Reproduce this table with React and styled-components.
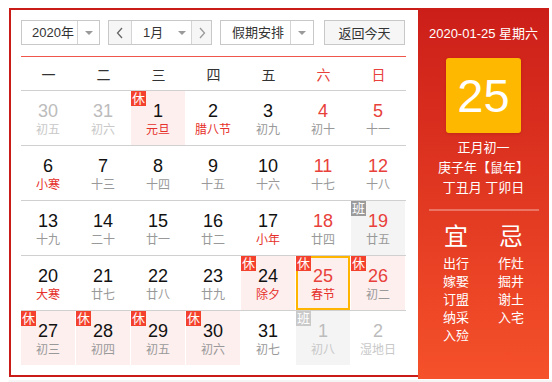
import React from "react";
import styled, { createGlobalStyle, css } from "styled-components";

const Global = createGlobalStyle`
  html, body { margin: 0; padding: 0; background: #fff; }
  body { font-family: "Liberation Sans", "Noto Sans CJK SC", sans-serif; }
`;

const Page = styled.div`
  padding: 8px 0 0 9px;
`;

const Widget = styled.div`
  display: flex;
  width: 540px;
  height: 370px;
`;

const Main = styled.div`
  box-sizing: border-box;
  width: 409px;
  height: 369px;
  border: 2px solid #c91c18;
  border-right: none;
  padding: 10px 12px 0 10px;
  background: #fff;
`;

const Toolbar = styled.div`
  display: flex;
  align-items: center;
  height: 25px;
  padding-bottom: 11px;
  border-bottom: 1px solid #f0574a;
`;

const Box = styled.div`
  box-sizing: border-box;
  display: flex;
  height: 25px;
  border: 1px solid #c8c8c8;
  margin-right: ${(p) => p.$mr || 8}px;
  font-size: 13px;
  color: #333;
  background: #fff;
`;

const Part = styled.div`
  box-sizing: border-box;
  display: flex;
  align-items: center;
  justify-content: ${(p) => p.$justify || "flex-start"};
  flex: none;
  width: ${(p) => p.$w}px;
  padding-left: ${(p) => p.$pl || 0}px;
  border-left: ${(p) => (p.$divider ? "1px solid #d4d4d4" : "none")};
  background: ${(p) => (p.$gray ? "#f6f6f6" : "#fff")};
  line-height: 23px;
  white-space: nowrap;
`;

const Caret = styled.span`
  flex: none;
  width: 0;
  height: 0;
  border-left: 4px solid transparent;
  border-right: 4px solid transparent;
  border-top: 4px solid #9a9a9a;
  margin-left: ${(p) => p.$ml || 0}px;
`;

const Button = styled.div`
  box-sizing: border-box;
  width: 81px;
  height: 25px;
  border: 1px solid #c8c8c8;
  background: #f6f6f6;
  font-size: 13px;
  color: #333;
  display: flex;
  align-items: center;
  justify-content: center;
  margin-left: 2px;
`;

const WeekHead = styled.div`
  display: grid;
  grid-template-columns: repeat(7, 55px);
  height: 33px;
  align-items: center;
  border-bottom: 1px solid #d0d0d0;
`;

const WeekDay = styled.div`
  text-align: center;
  font-size: 14px;
  color: ${(p) => (p.$red ? "#e8413b" : "#333")};
  padding-top: 1px;
`;

const Row = styled.div`
  display: grid;
  grid-template-columns: repeat(7, 55px);
  height: 54px;
  & + & { border-top: 1px solid #d0d0d0; }
`;

const Cell = styled.div`
  position: relative;
  box-sizing: border-box;
  width: 54px;
  height: 54px;
  padding-top: 10px;
  display: flex;
  flex-direction: column;
  align-items: center;
  background: ${(p) =>
    p.$bg === "rest" ? "#fdefee" : p.$bg === "work" ? "#f4f4f4" : "#fff"};
  ${(p) =>
    p.$today &&
    css`
      border: 2px solid #ffb400;
      padding-top: 8px;
    `}
`;

const Num = styled.div`
  font-size: 18px;
  line-height: 20px;
  color: ${(p) => (p.$other ? "#bcbcbc" : p.$red ? "#e8413b" : "#111")};
`;

const Lunar = styled.div`
  margin-top: 1px;
  font-size: 12px;
  line-height: 16px;
  color: ${(p) => (p.$other ? "#c8c8c8" : p.$red ? "#e6302b" : "#999")};
`;

const Badge = styled.span`
  position: absolute;
  left: ${(p) => (p.$today ? -2 : 0)}px;
  top: ${(p) => (p.$today ? -2 : 0)}px;
  width: 15px;
  height: 15px;
  line-height: 15px;
  font-size: 13px;
  text-align: center;
  color: #fff;
  background: ${(p) =>
    p.$kind === "rest" ? "#f4412e" : p.$other ? "#c9c9c9" : "#9b9b9b"};
`;

const Side = styled.div`
  box-sizing: border-box;
  width: 131px;
  height: 371px;
  padding-top: 16px;
  display: flex;
  flex-direction: column;
  align-items: center;
  background: linear-gradient(180deg, #cc1e19 0%, #f5512a 100%);
  color: #fff;
`;

const DateText = styled.div`
  font-size: 13px;
  line-height: 20px;
`;

const BigDay = styled.div`
  margin-top: 14px;
  width: 75px;
  height: 75px;
  border-radius: 3px;
  background: #ffb800;
  box-shadow: 0 1px 3px rgba(120, 20, 0, 0.25);
  display: flex;
  align-items: center;
  justify-content: center;
  font-size: 47px;
  line-height: 1;
`;

const LunarInfo = styled.div`
  margin-top: 5px;
  font-size: 13px;
  line-height: 20px;
  text-align: center;
`;

const Divider = styled.div`
  margin-top: 11px;
  width: 110px;
  height: 2px;
  background: rgba(255, 255, 255, 0.3);
`;

const Almanac = styled.div`
  margin-top: 11px;
  display: grid;
  grid-template-columns: 55px 55px;
`;

const AlmanacCol = styled.div`
  display: flex;
  flex-direction: column;
  align-items: center;
`;

const AlmanacTitle = styled.div`
  font-size: 24px;
  line-height: 30px;
  margin-bottom: 3px;
`;

const AlmanacItem = styled.div`
  font-size: 13px;
  line-height: 18px;
`;

const Footer = styled.div`
  margin-top: 2px;
  height: 10px;
  background: #f5f5f5;
`;

const weeks = ["一", "二", "三", "四", "五", "六", "日"];

// d: number, l: lunar, o: other month, r: red number, lr: red lunar, bg, badge, today
const rows = [
  [
    { d: 30, l: "初五", o: 1 },
    { d: 31, l: "初六", o: 1 },
    { d: 1, l: "元旦", lr: 1, bg: "rest", badge: "rest" },
    { d: 2, l: "腊八节", lr: 1 },
    { d: 3, l: "初九" },
    { d: 4, l: "初十", r: 1 },
    { d: 5, l: "十一", r: 1 },
  ],
  [
    { d: 6, l: "小寒", lr: 1 },
    { d: 7, l: "十三" },
    { d: 8, l: "十四" },
    { d: 9, l: "十五" },
    { d: 10, l: "十六" },
    { d: 11, l: "十七", r: 1 },
    { d: 12, l: "十八", r: 1 },
  ],
  [
    { d: 13, l: "十九" },
    { d: 14, l: "二十" },
    { d: 15, l: "廿一" },
    { d: 16, l: "廿二" },
    { d: 17, l: "小年", lr: 1 },
    { d: 18, l: "廿四", r: 1 },
    { d: 19, l: "廿五", r: 1, bg: "work", badge: "work" },
  ],
  [
    { d: 20, l: "大寒", lr: 1 },
    { d: 21, l: "廿七" },
    { d: 22, l: "廿八" },
    { d: 23, l: "廿九" },
    { d: 24, l: "除夕", lr: 1, bg: "rest", badge: "rest" },
    { d: 25, l: "春节", r: 1, lr: 1, badge: "rest", today: 1 },
    { d: 26, l: "初二", r: 1, bg: "rest", badge: "rest" },
  ],
  [
    { d: 27, l: "初三", bg: "rest", badge: "rest" },
    { d: 28, l: "初四", bg: "rest", badge: "rest" },
    { d: 29, l: "初五", bg: "rest", badge: "rest" },
    { d: 30, l: "初六", bg: "rest", badge: "rest" },
    { d: 31, l: "初七" },
    { d: 1, l: "初八", o: 1, bg: "work", badge: "work" },
    { d: 2, l: "湿地日", o: 1 },
  ],
];

const yi = ["出行", "嫁娶", "订盟", "纳采", "入殓"];
const ji = ["作灶", "掘井", "谢土", "入宅"];

export default function App() {
  return (
    <>
      <Global />
      <Page>
        <Widget>
          <Main>
            <Toolbar>
              <Box>
                <Part $w={55} $pl={10}>2020年</Part>
                <Part $w={22} $divider $justify="center"><Caret /></Part>
              </Box>
              <Box>
                <Part $w={22} $gray $justify="center">
                  <svg width="8" height="12" viewBox="0 0 8 12">
                    <path d="M6 1 L1.5 6 L6 11" fill="none" stroke="#666" strokeWidth="1.3" />
                  </svg>
                </Part>
                <Part $w={60} $divider $pl={11}>
                  1月<Caret $ml={15} />
                </Part>
                <Part $w={20} $divider $gray $justify="center">
                  <svg width="8" height="12" viewBox="0 0 8 12">
                    <path d="M2 1 L6.5 6 L2 11" fill="none" stroke="#999" strokeWidth="1.3" />
                  </svg>
                </Part>
              </Box>
              <Box $mr={8}>
                <Part $w={69} $pl={11}>假期安排</Part>
                <Part $w={23} $divider $justify="center"><Caret /></Part>
              </Box>
              <Button>返回今天</Button>
            </Toolbar>
            <WeekHead>
              {weeks.map((w, i) => (
                <WeekDay key={w} $red={i >= 5}>{w}</WeekDay>
              ))}
            </WeekHead>
            {rows.map((row, ri) => (
              <Row key={ri}>
                {row.map((c, ci) => (
                  <Cell key={ci} $bg={c.today ? "rest" : c.bg} $today={c.today}>
                    {c.badge && (
                      <Badge $kind={c.badge} $other={c.o} $today={c.today}>
                        {c.badge === "rest" ? "休" : "班"}
                      </Badge>
                    )}
                    <Num $other={c.o} $red={c.r}>{c.d}</Num>
                    <Lunar $other={c.o} $red={c.lr}>{c.l}</Lunar>
                  </Cell>
                ))}
              </Row>
            ))}
          </Main>
          <Side>
            <DateText>2020-01-25 星期六</DateText>
            <BigDay>25</BigDay>
            <LunarInfo>
              <div>正月初一</div>
              <div>庚子年【鼠年】</div>
              <div>丁丑月 丁卯日</div>
            </LunarInfo>
            <Divider />
            <Almanac>
              <AlmanacCol>
                <AlmanacTitle>宜</AlmanacTitle>
                {yi.map((t) => <AlmanacItem key={t}>{t}</AlmanacItem>)}
              </AlmanacCol>
              <AlmanacCol>
                <AlmanacTitle>忌</AlmanacTitle>
                {ji.map((t) => <AlmanacItem key={t}>{t}</AlmanacItem>)}
              </AlmanacCol>
            </Almanac>
          </Side>
        </Widget>
        <Footer />
      </Page>
    </>
  );
}
